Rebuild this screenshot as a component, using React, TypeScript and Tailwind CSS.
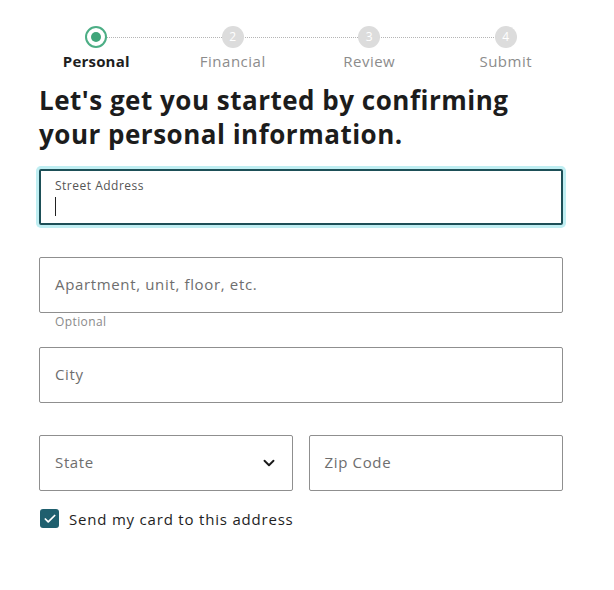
import { ChevronDown, Check } from "lucide-react"

const steps = [
  { n: 1, label: "Personal" },
  { n: 2, label: "Financial" },
  { n: 3, label: "Review" },
  { n: 4, label: "Submit" },
]

function Stepper() {
  return (
    <div className="relative ml-[28px] grid w-[546px] grid-cols-4 pt-[26px]">
      <div className="absolute left-[68px] right-[68px] top-[37px] border-t border-dotted border-[#b5b5b5]" />
      {steps.map((s, i) => (
        <div key={s.n} className="relative flex flex-col items-center">
          {i === 0 ? (
            <div className="flex h-[22px] w-[22px] items-center justify-center rounded-full border-[2px] border-[#4cae85] bg-white">
              <div className="h-[10px] w-[10px] rounded-full bg-[#3fa57a]" />
            </div>
          ) : (
            <div className="flex h-[22px] w-[22px] items-center justify-center rounded-full bg-[#dcdcdc] text-[12px] text-white">
              {s.n}
            </div>
          )}
          <div
            className={
              i === 0
                ? "mt-[2px] text-[15px] font-bold tracking-[0.2px] text-[#1e1e1e]"
                : "mt-[2px] text-[15px] tracking-[0.5px] text-[#8c8c8c]"
            }
          >
            {s.label}
          </div>
        </div>
      ))}
    </div>
  )
}

function Field({ placeholder, className = "" }: { placeholder: string; className?: string }) {
  return (
    <div className={`flex h-[56px] items-center rounded-[2px] border border-[#8f8f8f] px-[15px] ${className}`}>
      <span className="text-[15px] tracking-[0.65px] text-[#6e6e6e]">{placeholder}</span>
    </div>
  )
}

export default function App() {
  return (
    <div className="min-h-[590px] w-[614px] bg-white font-['Open_Sans','Noto_Sans',sans-serif] text-[#1e1e1e]">
      <Stepper />
      <div className="ml-[39px] w-[524px]">
        <h1 className="mt-[10px] text-[26px] font-bold leading-[34px] tracking-[0.5px] text-[#1c1c1c]">
          Let's get you started by confirming
          <br />
          your personal information.
        </h1>

        <div className="mt-[18px] h-[56px] rounded-[2px] border-[2px] border-[#1d4f57] px-[14px] pt-[6px] shadow-[0_0_0_3px_#bfeef2]">
          <div className="text-[12px] tracking-[0.5px] text-[#555]">Street Address</div>
          <div className="mt-[2px] h-[19px] w-[1px] bg-[#222]" />
        </div>

        <Field placeholder="Apartment, unit, floor, etc." className="mt-[32px]" />
        <div className="px-[16px] text-[12px] tracking-[0.4px] text-[#8a8a8a]">Optional</div>

        <Field placeholder="City" className="mt-[16px]" />

        <div className="mt-[32px] flex gap-[16px]">
          <div className="flex h-[56px] flex-1 items-center justify-between rounded-[2px] border border-[#8f8f8f] pl-[15px] pr-[14px]">
            <span className="text-[15px] tracking-[0.65px] text-[#6e6e6e]">State</span>
            <ChevronDown size={18} strokeWidth={2.5} className="text-[#1a1a1a]" />
          </div>
          <Field placeholder="Zip Code" className="flex-1" />
        </div>

        <label className="mt-[17px] flex items-center gap-[10px]">
          <span className="ml-[1px] flex h-[19px] w-[19px] items-center justify-center rounded-[3px] bg-[#1f5f6e]">
            <Check size={14} strokeWidth={3} className="text-white" />
          </span>
          <span className="text-[15px] tracking-[0.8px] text-[#1e1e1e]">Send my card to this address</span>
        </label>
      </div>
    </div>
  )
}
